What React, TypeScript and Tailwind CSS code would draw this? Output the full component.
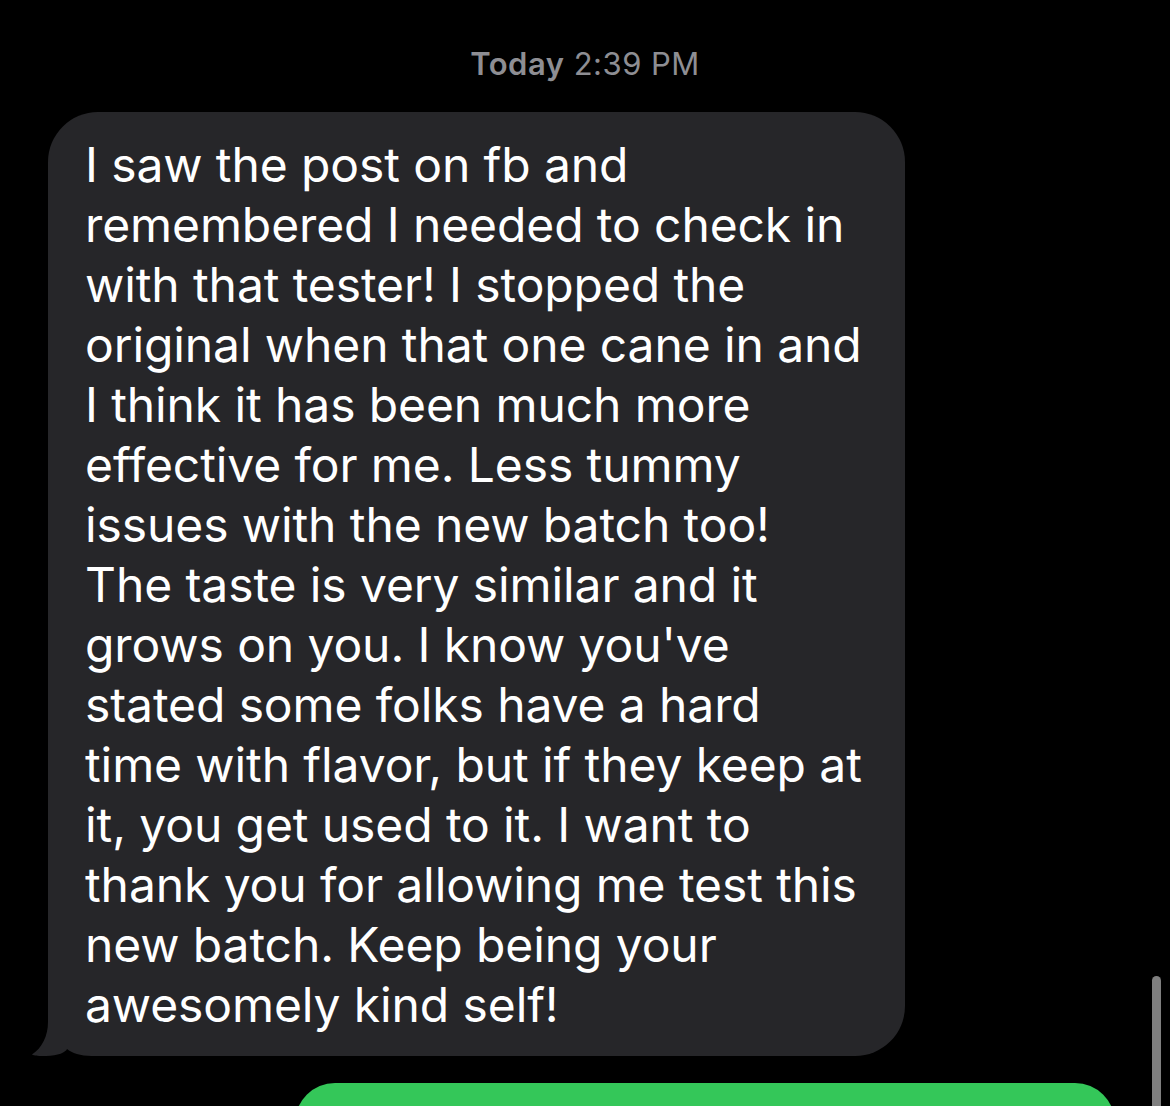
import React from 'react';

// Lines of the received message, broken as on the phone
const lines = [
  'I saw the post on fb and',
  'remembered I needed to check in',
  'with that tester! I stopped the',
  'original when that one cane in and',
  'I think it has been much more',
  'effective for me. Less tummy',
  'issues with the new batch too!',
  'The taste is very similar and it',
  "grows on you. I know you've",
  'stated some folks have a hard',
  'time with flavor, but if they keep at',
  'it, you get used to it. I want to',
  'thank you for allowing me test this',
  'new batch. Keep being your',
  'awesomely kind self!',
];

const App: React.FC = () => {
  return (
    <div
      className="relative h-[1106px] w-[1170px] overflow-hidden bg-black"
      style={{ fontFamily: 'Inter, "Noto Sans", sans-serif' }}
    >
      {/* Timestamp */}
      <div className="pt-[44px] text-center text-[31px] leading-[40px] tracking-[0.5px] text-[#8e8e93]">
        <span className="font-semibold">Today</span> 2:39 PM
      </div>

      {/* Received bubble */}
      <div className="relative ml-[48px] mt-[28px] w-[857px] rounded-[50px] bg-[#262629] pb-[21px] pl-[37px] pr-[20px] pt-[23px]">
        {/* Bubble tail */}
        <svg
          className="absolute bottom-0 left-[-16px]"
          width="70"
          height="60"
          viewBox="0 0 70 60"
        >
          <path
            d="M16 0 L16 26 C16 40 10 52 0 58.5 C2 60 8 60 14 60 C26 60 34 56 35 53 C40 57 48 60 60 60 L66 60 L66 0 Z"
            fill="#262629"
          />
        </svg>
        <div className="relative">
          {lines.map((line, i) => (
            <div key={i} className="whitespace-nowrap text-[48px] leading-[60px] tracking-[-0.1px] text-white">
              {line}
            </div>
          ))}
        </div>
      </div>

      {/* Sent bubble */}
      <div className="ml-[295px] mt-[27px] h-[80px] w-[820px] rounded-[50px] bg-[#34c759]" />

      {/* Scrollbar */}
      <div className="absolute left-[1152px] top-[976px] h-[160px] w-[9px] rounded-full bg-[#7f7f7f]" />
    </div>
  );
};

export default App;
